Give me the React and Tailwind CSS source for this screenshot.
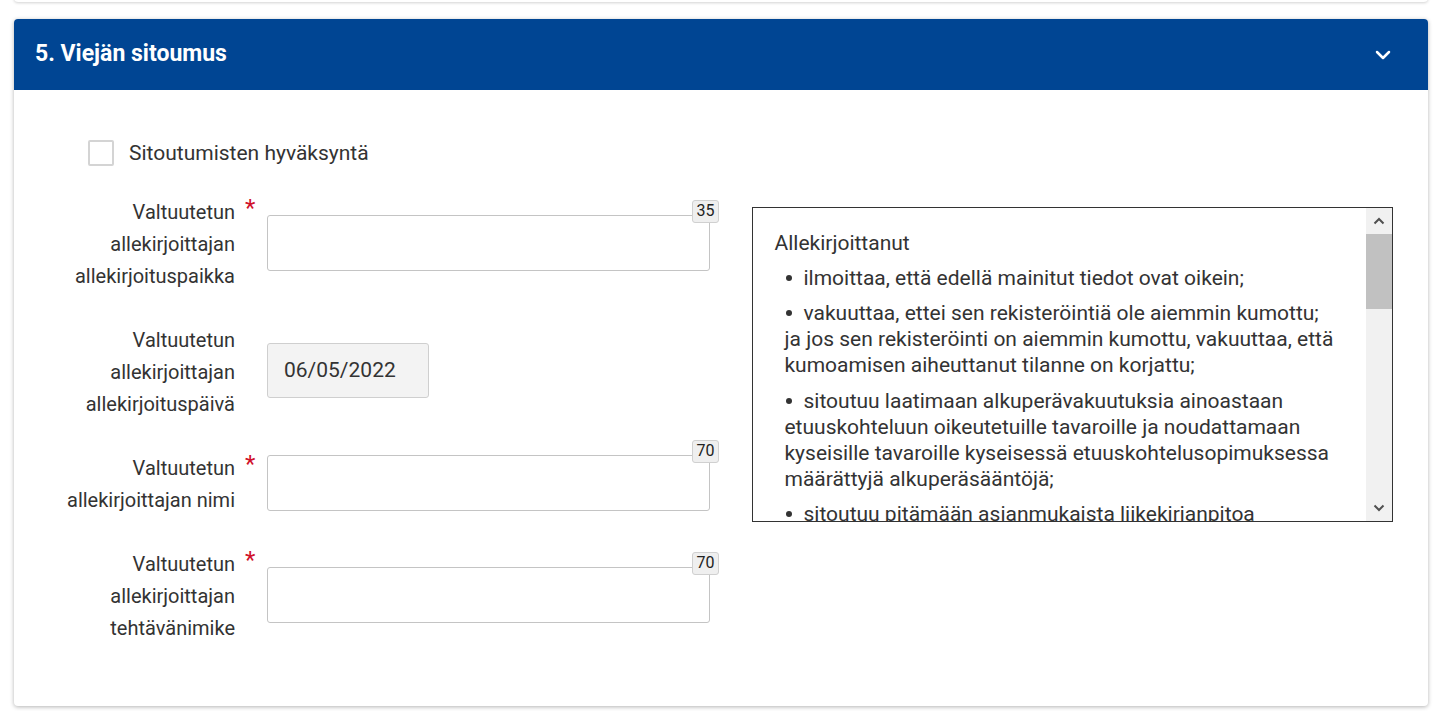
import { ChevronDown } from 'lucide-react';

const fields = [
  { lines: ['Valtuutetun', 'allekirjoittajan', 'allekirjoituspaikka'], required: true, max: 35 },
  { lines: ['Valtuutetun', 'allekirjoittajan', 'allekirjoituspäivä'], date: '06/05/2022' },
  { lines: ['Valtuutetun', 'allekirjoittajan nimi'], required: true, max: 70 },
  { lines: ['Valtuutetun', 'allekirjoittajan', 'tehtävänimike'], required: true, max: 70 },
];

function FieldRow({ field }) {
  return (
    <div className="flex items-center">
      <div className="w-[200px] whitespace-nowrap text-right text-[20px] leading-[32px] text-[#333]">
        {field.lines.map((l) => (
          <div key={l}>{l}</div>
        ))}
      </div>
      <div className="w-[32px] self-stretch">
        {field.required && (
          <span className="block pl-[10px] pt-[1px] text-[24px] leading-[22px] text-[#d0112b]">*</span>
        )}
      </div>
      {field.date ? (
        <div className="mb-[3px] flex h-[55px] w-[162px] items-center rounded-[3px] border border-[#cfcfcf] bg-[#f3f3f3] pl-[16px] text-[21px] text-[#333]">
          {field.date}
        </div>
      ) : (
        <div className="relative mb-[3px] h-[56px] w-[443px] rounded-[3px] border border-[#c4c4c4] bg-white">
          <span className="absolute right-[-10px] top-[-16px] flex h-[23px] w-[27px] items-center justify-center rounded-[3px] border border-[#d0d0d0] bg-[#efefef] text-[16px] text-[#222]">
            {field.max}
          </span>
        </div>
      )}
    </div>
  );
}

function Bullet() {
  return <span className="mb-[3px] ml-[2px] mr-[11px] inline-block h-[6px] w-[6px] rounded-full bg-[#333] align-middle" />;
}

function ScrollBar() {
  return (
    <div className="flex w-[26px] flex-col bg-[#f1f1f1]">
      <div className="flex h-[26px] items-center justify-center">
        <svg width="12" height="8" viewBox="0 0 12 8">
          <path d="M1.5 6.5 L6 2 L10.5 6.5" fill="none" stroke="#505050" strokeWidth="2" />
        </svg>
      </div>
      <div className="h-[75px] bg-[#c1c1c1]" />
      <div className="flex-1" />
      <div className="flex h-[26px] items-center justify-center">
        <svg width="12" height="8" viewBox="0 0 12 8">
          <path d="M1.5 1.5 L6 6 L10.5 1.5" fill="none" stroke="#505050" strokeWidth="2" />
        </svg>
      </div>
    </div>
  );
}

export default function App() {
  return (
    <div className="min-h-[711px] overflow-hidden bg-white font-['Roboto',sans-serif]">
      {/* previous card edge */}
      <div className="ml-[14px] mr-[20px] -mt-[20px] h-[22px] rounded-b-[4px] bg-white shadow-[0_1px_3px_rgba(0,0,0,0.18)]" />

      <div className="ml-[14px] mr-[20px] mt-[17px] rounded-[4px] bg-white shadow-[0_1px_4px_rgba(0,0,0,0.3)]">
        <div className="flex h-[71px] items-center justify-between rounded-t-[4px] bg-[#004593] pl-[21px] pr-[33px]">
          <h2 className="text-[23px] font-bold text-white">5. Viejän sitoumus</h2>
          <ChevronDown className="h-[24px] w-[24px] text-white" strokeWidth={2.5} />
        </div>

        <div className="pb-[62px] pl-[21px] pr-[35px] pt-[50px]">
          <label className="ml-[53px] flex h-[26px] items-center gap-[15px]">
            <span className="h-[26px] w-[26px] rounded-[2px] border-2 border-[#d4d4d4] bg-white" />
            <span className="text-[21px] leading-[26px] text-[#333]">Sitoutumisten hyväksyntä</span>
          </label>

          <div className="mt-[30px] flex">
            <div className="flex w-[718px] flex-col gap-[32px]">
              {fields.map((f, i) => (
                <FieldRow key={i} field={f} />
              ))}
            </div>

            <div className="mt-[11px] flex h-[315px] w-[641px] border border-[#333] bg-white">
              <div className="flex-1 overflow-hidden pl-[21px] pt-[22px] text-[21px] leading-[26px] text-[#333]">
                <p>Allekirjoittanut</p>
                <p className="mt-[9px] pl-[10px]">
                  <Bullet />
                  ilmoittaa, että edellä mainitut tiedot ovat oikein;
                </p>
                <p className="mt-[9px] pl-[10px]">
                  <Bullet />
                  vakuuttaa, ettei sen rekisteröintiä ole aiemmin kumottu;
                  <br />
                  ja jos sen rekisteröinti on aiemmin kumottu, vakuuttaa, että
                  <br />
                  kumoamisen aiheuttanut tilanne on korjattu;
                </p>
                <p className="mt-[10px] pl-[10px]">
                  <Bullet />
                  sitoutuu laatimaan alkuperävakuutuksia ainoastaan
                  <br />
                  etuuskohteluun oikeutetuille tavaroille ja noudattamaan
                  <br />
                  kyseisille tavaroille kyseisessä etuuskohtelusopimuksessa
                  <br />
                  määrättyjä alkuperäsääntöjä;
                </p>
                <p className="mt-[9px] pl-[10px]">
                  <Bullet />
                  sitoutuu pitämään asianmukaista liikekirjanpitoa
                </p>
              </div>
              <ScrollBar />
            </div>
          </div>
        </div>
      </div>
    </div>
  );
}
